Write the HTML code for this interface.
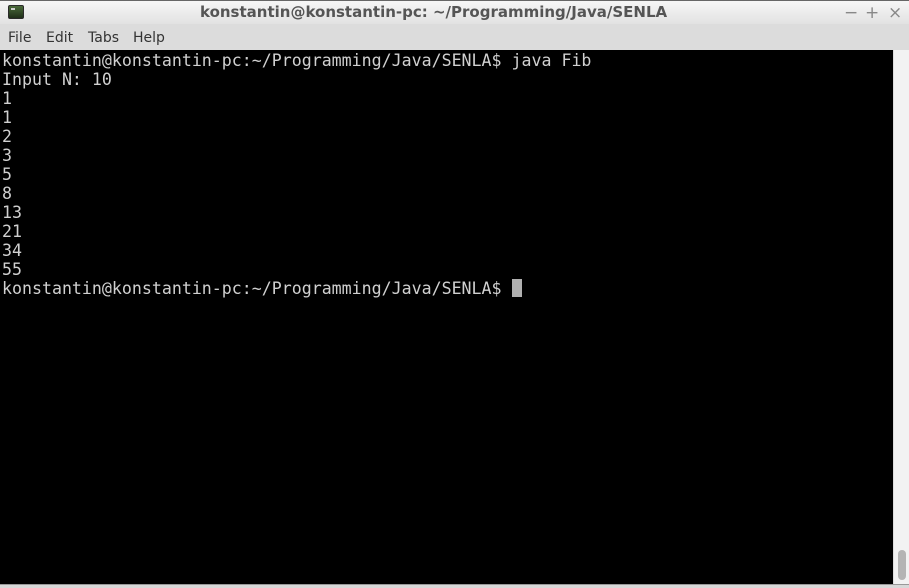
<!DOCTYPE html>
<html><head><meta charset="utf-8"><style>
body{margin:0;width:909px;height:588px;overflow:hidden;background:#dcdcdc;position:relative;font-family:"DejaVu Sans","Liberation Sans",sans-serif}
.title{position:absolute;left:0;top:0;width:909px;height:24px;background:linear-gradient(#f6f6f6,#e2e2e2);border-top:1px solid #666;box-sizing:border-box}
.title .t{position:absolute;left:200px;top:2px;white-space:nowrap;font-weight:bold;font-size:15px;color:#555}
.icon{position:absolute;left:8px;top:4px;width:16px;height:14px;background:linear-gradient(#4a6a3a,#1f2f18);border-radius:2px;border:1px solid #2a2a2a;box-sizing:border-box}
.icon:after{content:"";position:absolute;left:2px;top:2px;width:4px;height:2px;background:#ccc}
.btn{position:absolute;top:2px;font-size:17px;color:#888}
.menu{position:absolute;left:0;top:24px;width:909px;height:26px;background:#dcdcdc;font-size:14px;color:#333}
.menu span{position:absolute;top:6px}
.term{position:absolute;left:0;top:50px;width:893px;height:534px;background:#000}
pre{margin:0;position:absolute;left:2px;top:1px;font-family:"DejaVu Sans Mono","Liberation Mono",monospace;font-size:16.6px;line-height:19px;color:#d0d0d0}
.cur{position:absolute;left:512px;top:229px;width:10px;height:18px;background:#b0b0b0}
.sb{position:absolute;left:893px;top:50px;width:16px;height:534px;background:#f2f2f2;border-left:1px solid #ddd;box-sizing:border-box}
.th{position:absolute;left:4px;top:500px;width:8px;height:30px;background:#b4b4b4;border-radius:4px}
.bot{position:absolute;left:0;top:584px;width:909px;height:4px;background:#d8d8d8;border-top:1px solid #999;box-sizing:border-box}
</style></head><body>
<div class="title"><div class="icon"></div><div class="t">konstantin@konstantin-pc: ~/Programming/Java/SENLA</div>
<span class="btn" style="left:844px">−</span><span class="btn" style="left:865px">+</span><span class="btn" style="left:888px">×</span></div>
<div class="menu"><span style="left:8px">File</span><span style="left:46px">Edit</span><span style="left:88px">Tabs</span><span style="left:133px">Help</span></div>
<div class="term"><pre>konstantin@konstantin-pc:~/Programming/Java/SENLA$ java Fib
Input N: 10
1
1
2
3
5
8
13
21
34
55
konstantin@konstantin-pc:~/Programming/Java/SENLA$ </pre><div class="cur"></div></div>
<div class="sb"><div class="th"></div></div>
<div class="bot"></div>
</body></html>
